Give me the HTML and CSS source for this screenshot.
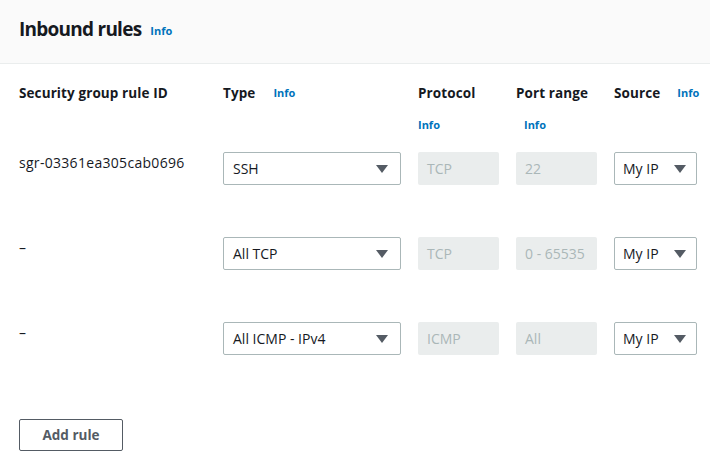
FILE: index.html
```html
<!DOCTYPE html>
<html>
<head>
<meta charset="utf-8">
<link rel="stylesheet" href="styles.css">
</head>
<body>
<div class="panel">
  <div class="panel-header">
    <h2 class="title">Inbound rules</h2>
    <a class="info info-title">Info</a>
  </div>
  <div class="panel-body">
    <div class="rules">
      <div class="hcell"><span class="hlabel">Security group rule ID</span></div>
      <div class="hcell"><span class="hlabel">Type</span><a class="info">Info</a></div>
      <div class="hcell wrap"><span class="hlabel">Protocol</span><a class="info">Info</a></div>
      <div class="hcell wrap"><span class="hlabel">Port range</span><a class="info info-indent">Info</a></div>
      <div class="hcell nowrap"><span class="hlabel">Source</span><a class="info">Info</a></div>

      <div class="idcell">sgr-03361ea305cab0696</div>
      <div class="select"><span>SSH</span><span class="caret"></span></div>
      <div class="input">TCP</div>
      <div class="input">22</div>
      <div class="select small"><span>My IP</span><span class="caret"></span></div>

      <div class="idcell">–</div>
      <div class="select"><span>All TCP</span><span class="caret"></span></div>
      <div class="input">TCP</div>
      <div class="input">0 - 65535</div>
      <div class="select small"><span>My IP</span><span class="caret"></span></div>

      <div class="idcell">–</div>
      <div class="select"><span>All ICMP - IPv4</span><span class="caret"></span></div>
      <div class="input">ICMP</div>
      <div class="input">All</div>
      <div class="select small"><span>My IP</span><span class="caret"></span></div>
    </div>
    <button class="btn">Add rule</button>
  </div>
</div>
</body>
</html>
```

FILE: styles.css
```css
* { box-sizing: border-box; }
html, body {
  margin: 0;
  padding: 0;
  background: #ffffff;
  font-family: "Open Sans", "Noto Sans", sans-serif;
  color: #16191f;
}
.panel { width: 710px; }
.panel-header {
  height: 64px;
  background: #fafafa;
  border-bottom: 1px solid #eaeded;
  display: flex;
  align-items: center;
  padding: 0 19px 5px;
}
.title {
  margin: 0;
  font-size: 19px;
  font-weight: 700;
  letter-spacing: -0.75px;
  line-height: 24px;
}
.info {
  color: #0073bb;
  font-size: 11px;
  font-weight: 700;
  line-height: 14px;
  text-decoration: none;
}
.info-title { margin-left: 9px; margin-top: 4px; }
.panel-body { padding: 20px 0 0 19px; }
.rules {
  display: grid;
  grid-template-columns: 187px 178px 81px 81px 83px;
  column-gap: 17px;
  row-gap: 52px;
  align-items: start;
}
.hcell {
  display: flex;
  flex-wrap: wrap;
  align-items: center;
  column-gap: 18px;
  row-gap: 14px;
  margin-bottom: -34px;
  font-size: 13.5px;
  font-weight: 700;
  line-height: 18px;
}
.hcell.nowrap { flex-wrap: nowrap; column-gap: 17px; }
.hcell.wrap .info { flex-basis: 100%; }
.hcell.wrap .info-indent { padding-left: 8px; }
.hcell .hlabel { white-space: nowrap; letter-spacing: 0.1px; }
.hcell .info { line-height: 18px; white-space: nowrap; }
.idcell {
  font-size: 14px;
  line-height: 22px;
  color: #16191f;
  letter-spacing: 0.3px;
}
.select {
  height: 33px;
  border: 1px solid #aab7b8;
  border-radius: 2px;
  display: flex;
  align-items: center;
  justify-content: space-between;
  padding: 0 12px 0 9px;
  font-size: 14px;
  color: #16191f;
  background: #fff;
}
.select.small { padding: 0 10px 0 8px; }
.caret {
  width: 0;
  height: 0;
  border-left: 6px solid transparent;
  border-right: 6px solid transparent;
  border-top: 8px solid #545b64;
}
.input {
  height: 33px;
  background: #eaeded;
  border-radius: 2px;
  display: flex;
  align-items: center;
  padding: 0 9px;
  font-size: 14px;
  color: #aab7b8;
  white-space: nowrap;
  overflow: hidden;
}
.btn {
  margin-top: 64px;
  width: 104px;
  height: 32px;
  background: #fff;
  border: 1px solid #545b64;
  border-radius: 2px;
  font-family: inherit;
  font-size: 13.5px;
  font-weight: 700;
  color: #545b64;
}
```
